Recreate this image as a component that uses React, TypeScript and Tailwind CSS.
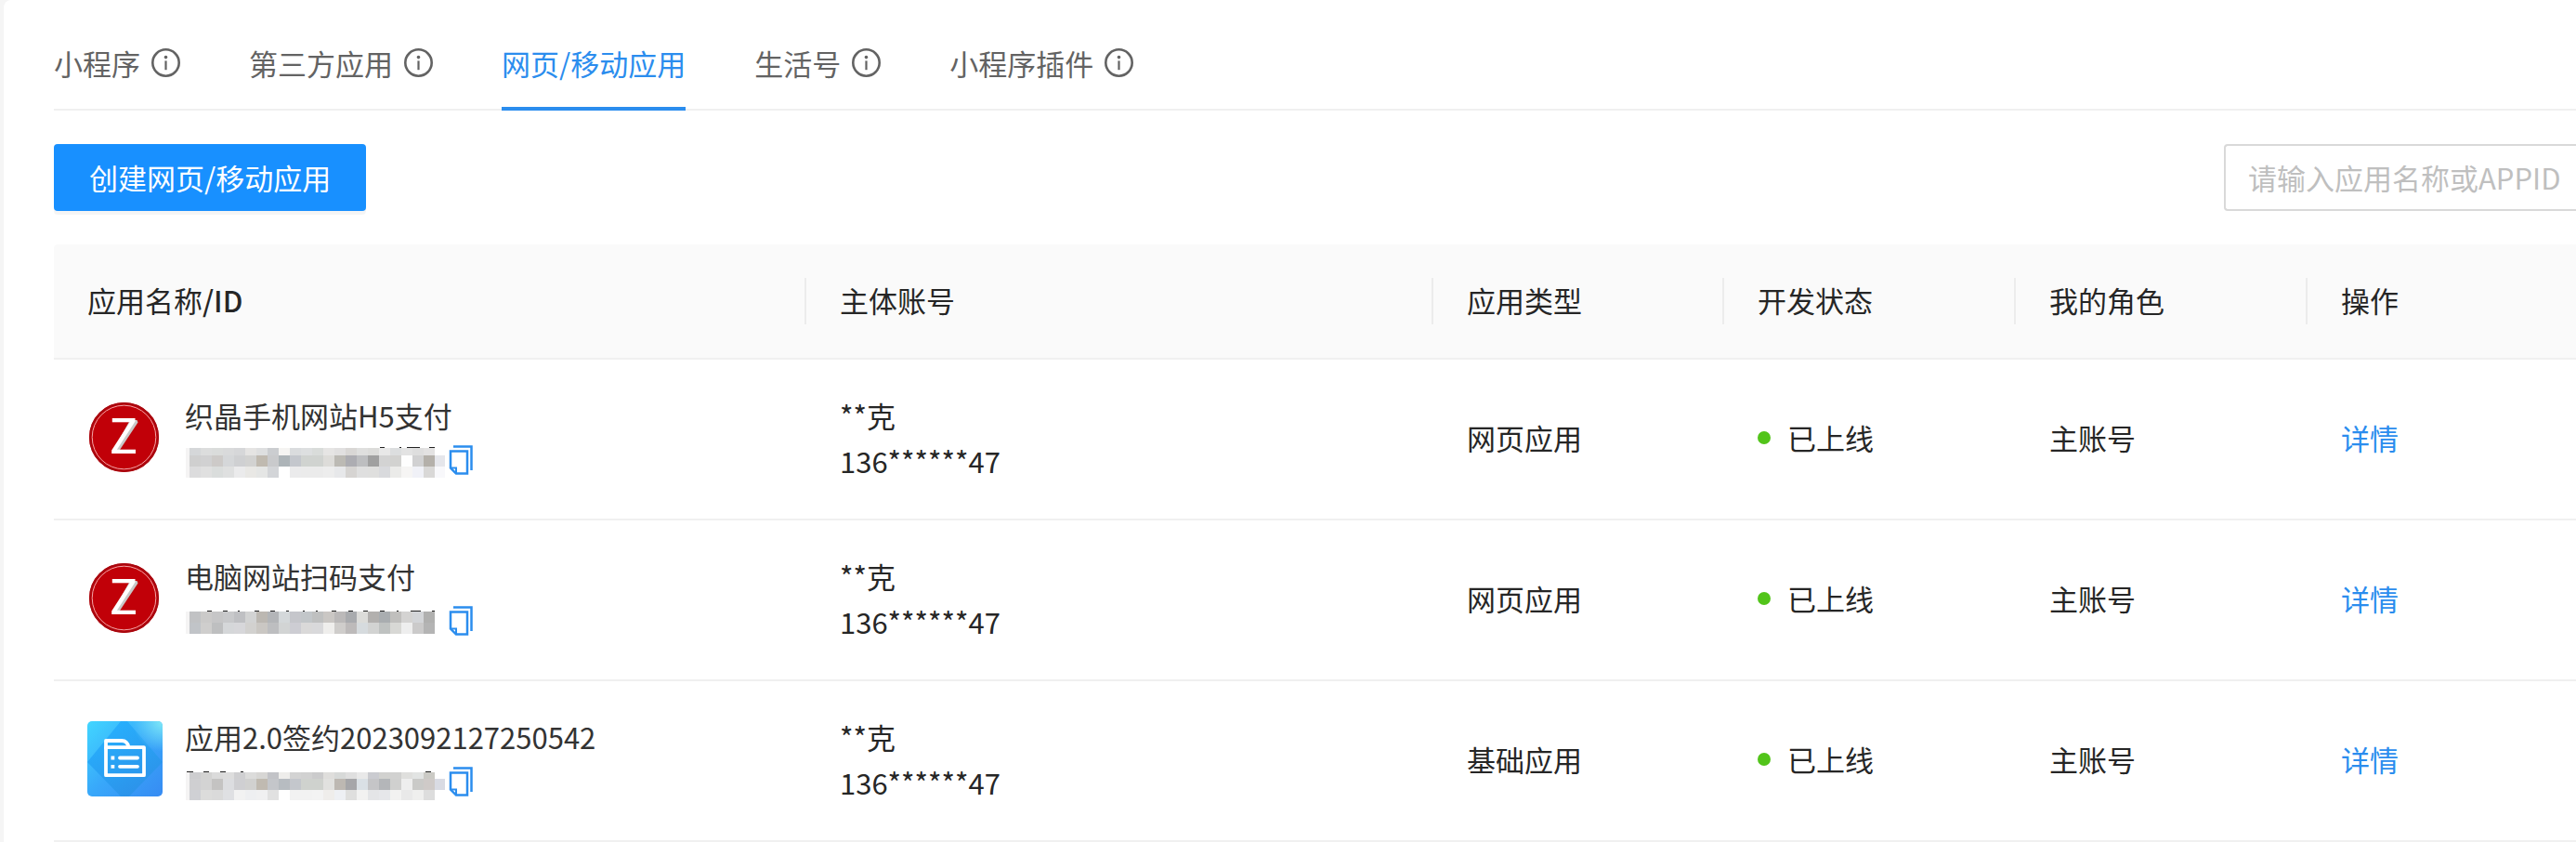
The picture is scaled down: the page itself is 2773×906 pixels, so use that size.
import { useState } from "react";

interface AppRow {
  id: string;
  name: string;
  logo: "z" | "folder";
  mask: Mask;
  type: string;
}

interface Mask {
  // top of every band, its height and its cell colours
  bands: Array<{ y: number; h: number; colors: string[] }>;
  // tips of the digits that stick out above the mask: x, width
  tips: Array<[number, number]>;
  tipY: number;
}

const TABS = [
  { key: "mini", label: "小程序", info: true },
  { key: "third", label: "第三方应用", info: true },
  { key: "web", label: "网页/移动应用", info: false },
  { key: "life", label: "生活号", info: true },
  { key: "plugin", label: "小程序插件", info: true },
];

const ROWS: AppRow[] = [
  {
    id: "h5",
    name: "织晶手机网站H5支付",
    logo: "z",
    type: "网页应用",
    mask: {
      bands: [
        {
          y: 7,
          h: 8,
          colors: ["#d5d7d9", "#dcdddd", "#dadcdb", "#d9dadb", "#d6d7d9", "#e5e4e3", "#dedfe0", "#cbcdd0", "#f5f4f2", "#dadcde", "#dddfe0", "#d9dcda", "#e6e5e4", "#e1e0e0", "#d9d7d5", "#dfdfde", "#dcdcda", "#e8e8e8", "#dcdedf", "#e3e3e3", "#dedede", "#e3e2e2"],
        },
        {
          y: 15,
          h: 12,
          colors: ["#cfcfcf", "#d1d1d2", "#cdcac8", "#d5d7d9", "#cfd0d2", "#d2d2d1", "#c0bab0", "#c9cacc", "#adb4b8", "#c4c7cd", "#d0d3d0", "#d0d3d0", "#dddcd9", "#bcbab4", "#adadb2", "#bdbec0", "#a0a0a0", "#d3d3d3", "#d2d2d0", "#fefefe", "#d1d1d2", "#b4b0aa", "#e5e6eb"],
        },
        {
          y: 27,
          h: 12,
          colors: ["#dcdcdd", "#e0e0e0", "#dadddc", "#dfe0e0", "#ebebec", "#e9e8e5", "#e5e6e5", "#d3d5d8", "#ffffff", "#ebebec", "#ebebeb", "#ebebeb", "#ededed", "#e7e8ea", "#d6d4d2", "#dfdfdf", "#dfdfde", "#d9dadd", "#ebebe9", "#f6f5f4", "#f0f1f7", "#d9d8d7", "#f8f8fb"],
        },
      ],
      tips: [[210, 5], [231, 2], [239, 14], [263, 6]],
      tipY: 6,
    },
  },
  {
    id: "scan",
    name: "电脑网站扫码支付",
    logo: "z",
    type: "网页应用",
    mask: {
      bands: [
        {
          y: 10,
          h: 12,
          colors: ["#c1c2c4", "#cbcac9", "#c6c6c7", "#c8c9cb", "#bfc0c3", "#d2d3d3", "#bcb8b2", "#b3b5b8", "#d4d8da", "#c5c6cb", "#c2c6c9", "#bfc0c0", "#cac7c4", "#bbb9b9", "#a9abae", "#dcdcd9", "#b2b0ae", "#a9adb0", "#c0bfbd", "#d4d3d2", "#d3d5d8", "#b0b0af"],
        },
        {
          y: 22,
          h: 12,
          colors: ["#c1c4c8", "#cfcecd", "#bebfc0", "#d5d7d9", "#d7d7da", "#d2d1cf", "#cac7c3", "#bdbec0", "#d2d4d4", "#cdcdd3", "#dad9d9", "#d9d9db", "#efeeec", "#cfcdcb", "#bdbaba", "#d6dbde", "#d2d3d2", "#bfc2c1", "#d8d8d5", "#eeeeee", "#cbcaca", "#b4b4b4"],
        },
      ],
      tips: [[24, 5], [41, 5], [57, 2], [75, 5], [92, 5], [109, 3], [127, 2], [141, 2], [158, 5], [176, 5], [192, 5], [210, 5], [228, 2], [243, 11], [266, 3]],
      tipY: 9,
    },
  },
  {
    id: "base",
    name: "应用2.0签约2023092127250542",
    logo: "folder",
    type: "基础应用",
    mask: {
      bands: [
        {
          y: 10,
          h: 7,
          colors: ["#cdcdcf", "#d3d3d2", "#dbdbdb", "#dddddd", "#cfcfd1", "#dcdcdb", "#d7d6d4", "#c2c3c7", "#eeedeb", "#d3d3d3", "#d1d1d1", "#cbcbcc", "#dfdedc", "#d7d9d8", "#dfdfdf", "#e9e9e9", "#cacbd0", "#d1d1cf", "#d1d1d0", "#dfdfdd", "#e2e4e3", "#cbcac5"],
        },
        {
          y: 17,
          h: 12,
          colors: ["#cfcfd1", "#d3d3d3", "#c4c3c2", "#dcdde0", "#cfcfd2", "#d1d1d0", "#c0bab1", "#c4c6ca", "#b7bcc1", "#c4c7cc", "#cfd2ce", "#cfd2ce", "#e1e1df", "#bdb8b2", "#a6a6a9", "#dae0e5", "#c5c5c7", "#b4b6b9", "#d0d0cf", "#eeeeee", "#cacac8", "#cfcac8", "#d9dbe3"],
        },
        {
          y: 29,
          h: 11,
          colors: ["#cfd0d4", "#dcdcdb", "#dadada", "#dfe0e3", "#f2f2f2", "#eeeff1", "#f0f0f1", "#e1e1e1", "#ffffff", "#f2f2f2", "#f2f2f2", "#f3f3f3", "#efedeb", "#eef0f4", "#dfdfde", "#f2f2f1", "#e4e5e7", "#e6e7ea", "#f2f2f1", "#e9e9e9", "#efefee", "#dddddd"],
        },
      ],
      tips: [[2, 7], [20, 6], [38, 6], [60, 3], [259, 6]],
      tipY: 9,
    },
  },
];

function InfoIcon() {
  return (
    <svg className="h-[31px] w-[31px] shrink-0" viewBox="0 0 31 31" fill="none">
      <circle cx="15.5" cy="15.5" r="14.2" stroke="currentColor" strokeWidth="2.6" />
      <circle cx="15.5" cy="9.6" r="1.8" fill="currentColor" />
      <path d="M15.5 13.4v9.8" stroke="currentColor" strokeWidth="2.2" />
    </svg>
  );
}

function CopyIcon() {
  return (
    <svg className="h-8 w-[26px]" viewBox="0 0 26 32" fill="none" stroke="#2b8dee" strokeWidth="2.5">
      <path d="M5 1.500h19.500V27" />
      <path d="M2 6.500h18V30.600H8l-6-6z" />
      <path d="M2 24.500h6v6" strokeWidth="2" />
    </svg>
  );
}

function ZLogo() {
  return (
    <svg className="h-[81px] w-[81px] shrink-0" viewBox="0 0 81 81">
      <circle cx="39.5" cy="40.5" r="37.500" fill="#c10008" />
      <circle cx="39.5" cy="40.5" r="36.500" fill="none" stroke="#a8080f" strokeWidth="2" />
      <circle cx="39.5" cy="40.5" r="34.300" fill="none" stroke="#f0a6a8" strokeWidth="1" />
      {/* shade along the right side of the diagonal */}
      <path d="M46 22h7.500l1 2.500L35 54h-7z" fill="#c8c8c8" />
      <text
        x="39"
        y="58"
        textAnchor="middle"
        fontSize="52"
        fontFamily="'Noto Sans', 'Open Sans', sans-serif"
        fontWeight="400"
        fill="#fff"
      >
        Z
      </text>
    </svg>
  );
}

function FolderLogo() {
  return (
    <svg className="h-[81px] w-[81px] shrink-0 rounded-[5px]" viewBox="0 0 81 81" fill="none">
      <defs>
        <linearGradient id="folderBg" x1="0" y1="0" x2="1" y2="1">
          <stop offset="0" stopColor="#42d6ff" />
          <stop offset="0.5" stopColor="#38a8fa" />
          <stop offset="1" stopColor="#378bf3" />
        </linearGradient>
        <linearGradient id="folderDiamond" x1="0.2" y1="0.1" x2="0.7" y2="0.9">
          <stop offset="0" stopColor="#27b0fd" />
          <stop offset="1" stopColor="#2c93ea" />
        </linearGradient>
        <radialGradient id="folderGlow" cx="1" cy="0" r="0.4">
          <stop offset="0" stopColor="#7fe9f7" />
          <stop offset="1" stopColor="#7fe9f7" stopOpacity="0" />
        </radialGradient>
      </defs>
      <path d="M0 0h81v81H0z" fill="url(#folderBg)" />
      <path d="M36 0h7l38 44-36 37h-9L0 44z" fill="url(#folderDiamond)" />
      <path d="M0 0h81v81H0z" fill="url(#folderGlow)" />
      <g stroke="#fff" strokeWidth="3.8" strokeLinejoin="round">
        <path d="M20 28.200h41V58.200H20z" />
        <path d="M20 30v-9h17q6 0 7.500 7" />
      </g>
      <path d="M35 39.500h19M35 48.800h19" stroke="#fff" strokeWidth="3.8" strokeLinecap="round" />
      <path d="M25.500 37.600h3.800v3.800h-3.800zM25.500 46.900h3.800v3.800h-3.800z" fill="#fff" />
    </svg>
  );
}

// App id hidden under a pixelated strip
function MaskedId({ mask }: { mask: Mask }) {
  return (
    <svg className="h-10 w-[280px]" viewBox="0 0 280 40" shapeRendering="crispEdges">
      {mask.bands.map((band) => (
        <g key={band.y}>
          <rect x={1} y={band.y} width={4} height={band.h} fill="#f5f4f4" />
          {band.colors.map((color, i) => (
            <rect key={i} x={5 + i * 12} y={band.y} width={12} height={band.h} fill={color} />
          ))}
        </g>
      ))}
      {mask.tips.map(([x, w]) => (
        <rect key={x} x={x} y={mask.tipY} width={w} height={1} fill="#222" />
      ))}
    </svg>
  );
}

const HEADERS = ["应用名称", "主体账号", "应用类型", "开发状态", "我的角色", "操作"];

export default function App() {
  const [active, setActive] = useState("web");
  const [keyword, setKeyword] = useState("");

  return (
    <div className="min-h-screen overflow-x-hidden bg-[#f5f5f5] pl-1 font-['Noto_Sans_CJK_SC',sans-serif] text-[31px] leading-[49px] text-[#262626]">
      <main className="min-h-screen rounded-tl-lg bg-white pt-5 pl-[54px]">
        <nav className="flex gap-[74px] border-b-2 border-[#f0f0f0]">
          {TABS.map((tab) => (
            <button
              key={tab.key}
              onClick={() => setActive(tab.key)}
              className={`-mb-[2px] flex h-[99px] items-center gap-3 border-b-4 whitespace-nowrap ${
                active === tab.key ? "border-[#2b8dee] text-[#2b8dee]" : "border-transparent text-[#636363]"
              }`}
            >
              {tab.label}
              {tab.info && <InfoIcon />}
            </button>
          ))}
        </nav>

        <div className="mt-9 flex items-center justify-between">
          <button className="h-[72px] rounded-sm bg-[#1890ff] px-[38px] pb-0.5 whitespace-nowrap text-white shadow-[0_4px_0_rgba(0,0,0,0.04)]">
            创建网页/移动应用
          </button>
          <input
            type="text"
            aria-label="搜索应用"
            placeholder="请输入应用名称或APPID"
            value={keyword}
            onChange={(e) => setKeyword(e.target.value)}
            className="h-[72px] w-[379px] rounded-l-sm border-2 border-r-0 border-[#d9d9d9] pb-0.5 pl-6 outline-none placeholder:text-[#bfbfbf]"
          />
        </div>

        <table className="mt-9 w-full table-fixed border-separate border-spacing-0 text-left">
          <colgroup>
            <col className="w-[810px]" />
            <col className="w-[675px]" />
            <col className="w-[313px]" />
            <col className="w-[314px]" />
            <col className="w-[314px]" />
            <col />
          </colgroup>
          <thead>
            <tr>
              {HEADERS.map((title, i) => (
                <th
                  key={title}
                  className="relative h-[124px] border-b-2 border-[#f0f0f0] bg-[#fafafa] pb-1 pl-9 font-normal first:rounded-tl-sm"
                >
                  {title}
                  {i === 0 && <span className="font-medium">/ID</span>}
                  {i < HEADERS.length - 1 && (
                    <span className="absolute top-9 right-0 h-[50px] w-[2px] bg-[#ececec]" />
                  )}
                </th>
              ))}
            </tr>
          </thead>
          <tbody className="[&_td]:h-[173px] [&_td]:border-b-2 [&_td]:border-[#f0f0f0] [&_td]:pb-1 [&_td]:pl-9">
            {ROWS.map((row) => (
              <tr key={row.id}>
                <td>
                  <div className="flex items-center gap-6">
                    {row.logo === "z" ? <ZLogo /> : <FolderLogo />}
                    <div className="text-[#333]">
                      <div>{row.name}</div>
                      <div className="flex h-[49px] items-center gap-1">
                        <MaskedId mask={row.mask} />
                        <button aria-label="复制">
                          <CopyIcon />
                        </button>
                      </div>
                    </div>
                  </div>
                </td>
                <td>
                  <div>**克</div>
                  <div>136******47</div>
                </td>
                <td>{row.type}</td>
                <td>
                  <span className="flex items-center gap-[18px]">
                    <span className="h-[14px] w-[14px] rounded-full bg-[#52c41a]" />
                    已上线
                  </span>
                </td>
                <td>主账号</td>
                <td>
                  <a href="#detail" className="text-[#2b8dee]">
                    详情
                  </a>
                </td>
              </tr>
            ))}
          </tbody>
        </table>
      </main>
    </div>
  );
}
